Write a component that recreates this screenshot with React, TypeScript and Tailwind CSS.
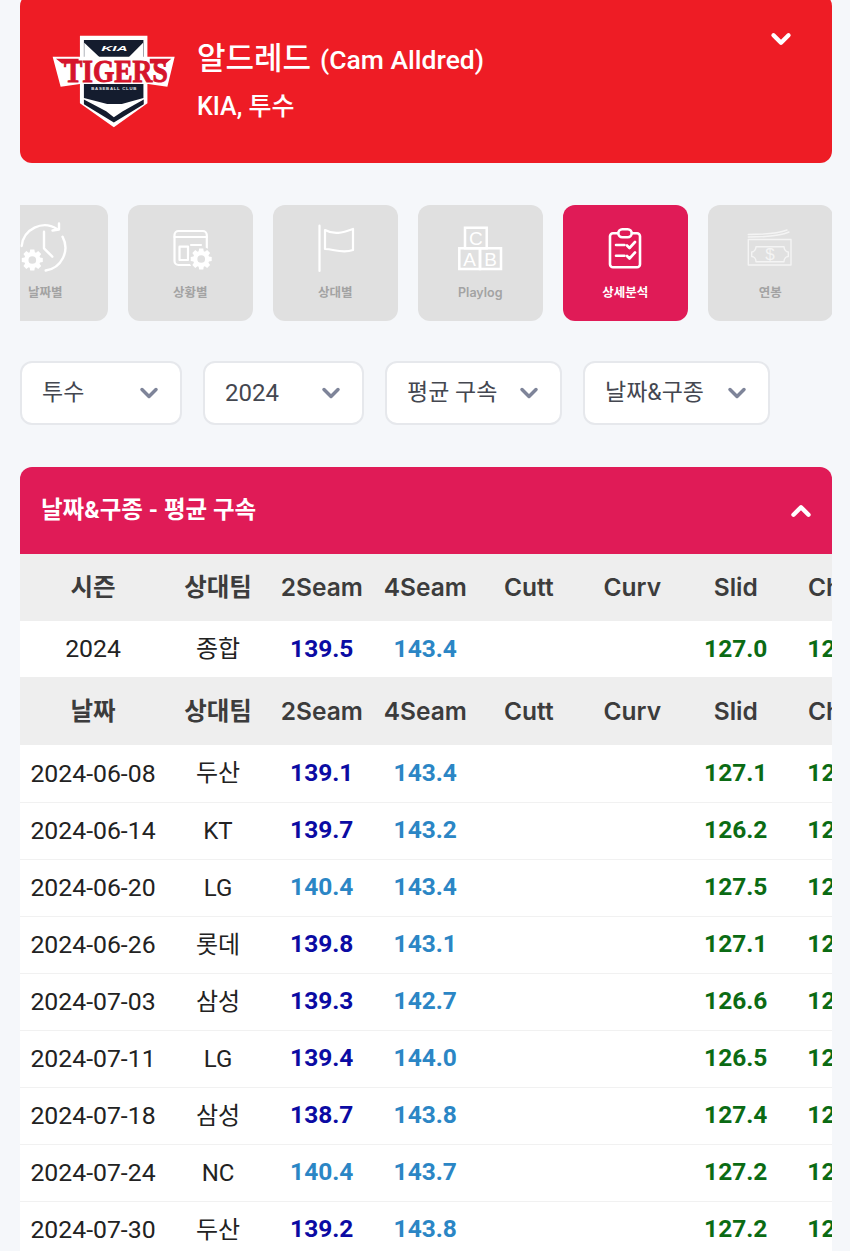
import { ChevronDown, ChevronUp } from "lucide-react";

const FONT = "font-['Roboto','Noto_Sans_CJK_KR',sans-serif]";
const INTER = "font-['Inter','Noto_Sans_CJK_KR',sans-serif]";

const DARK = "text-[#0b0ba3]";
const LIGHT = "text-[#2b86c5]";
const GREEN = "text-[#0b6b14]";

const rows = [
  { date: "2024-06-08", team: "두산", two: "139.1", four: "143.4", slid: "127.1" },
  { date: "2024-06-14", team: "KT", two: "139.7", four: "143.2", slid: "126.2" },
  { date: "2024-06-20", team: "LG", two: "140.4", four: "143.4", slid: "127.5" },
  { date: "2024-06-26", team: "롯데", two: "139.8", four: "143.1", slid: "127.1" },
  { date: "2024-07-03", team: "삼성", two: "139.3", four: "142.7", slid: "126.6" },
  { date: "2024-07-11", team: "LG", two: "139.4", four: "144.0", slid: "126.5" },
  { date: "2024-07-18", team: "삼성", two: "138.7", four: "143.8", slid: "127.4" },
  { date: "2024-07-24", team: "NC", two: "140.4", four: "143.7", slid: "127.2" },
  { date: "2024-07-30", team: "두산", two: "139.2", four: "143.8", slid: "127.2" },
];

const TigersLogo = () => (
  <svg viewBox="90 100 385 285" className="w-[128px] h-[95px] shrink-0">
    <path d="M180 105H383V308L282 380L180 308Z" fill="#fff" />
    <path d="M192 118H371V292L306 310H262L192 292Z" fill="#141c2e" />
    <path d="M193 126L240 170H193ZM370 126L326 170H370Z" fill="#fff" />
    <path d="M192 297L259 332L282 350L309 332L372 297V311L282 366L192 311Z" fill="#141c2e" />
    <text x="284" y="152" textAnchor="middle" fontFamily="Liberation Sans" fontStyle="italic" fontWeight="700" fontSize="24" fill="#fff" textLength="80" lengthAdjust="spacingAndGlyphs">KIA</text>
    <path d="M98 168H465L443 258L385 250H180L122 258Z" fill="#fff" />
    <path d="M108 174H176V188H126ZM455 174H390V188H438Z" fill="#d5142c" />
    <text x="288" y="245" textAnchor="middle" fontFamily="Liberation Serif" fontWeight="700" fontSize="92" fill="#d5142c" stroke="#d5142c" strokeWidth="3" textLength="312" lengthAdjust="spacingAndGlyphs">TIGERS</text>
    <text x="282" y="269" textAnchor="middle" fontFamily="Liberation Sans" fontWeight="700" fontSize="13" fill="#e4e6ec" textLength="136" lengthAdjust="spacing">BASEBALL CLUB</text>
  </svg>
);

// gear outline built from its tooth count, hole cut with evenodd
const gearPath = (x: number, y: number, r: number) => {
  const pts: string[] = [];
  const teeth = 8;
  for (let i = 0; i < teeth; i++) {
    const a = (i / teeth) * Math.PI * 2;
    const step = Math.PI / teeth;
    [
      [a - step * 0.5, r],
      [a + step * 0.5, r],
      [a + step * 0.8, r * 0.76],
      [a + step * 1.2, r * 0.76],
    ].forEach(([t, d]) => pts.push(`${(x + Math.cos(t) * d).toFixed(2)} ${(y + Math.sin(t) * d).toFixed(2)}`));
  }
  const h = r * 0.36;
  return `M${pts.join("L")}Z M${x - h} ${y}a${h} ${h} 0 1 0 ${h * 2} 0a${h} ${h} 0 1 0 ${-h * 2} 0Z`;
};

const Gear = ({ x, y, r }: { x: number; y: number; r: number }) => (
  <g>
    <circle cx={x} cy={y} r={r + 1.5} fill="#e0e0e0" stroke="none" />
    <path d={gearPath(x, y, r)} fill="#fff" fillRule="evenodd" stroke="none" />
  </g>
);

const ClockIcon = () => (
  <svg viewBox="0 0 52 52" className="w-[52px] h-[52px]" fill="none" stroke="#fff" strokeWidth="2.4" strokeLinecap="round" strokeLinejoin="round">
    <path d="M2.700 24A23 23 0 0 1 38 7" />
    <path d="M40 1.500V7.500L33.500 8.500" />
    <path d="M43.500 14.700A23 23 0 0 1 26.700 48.500" />
    <path d="M25 9.700V26.300L33.300 34.700" />
    <Gear x={13.300} y={38} r={10.700} />
  </svg>
);

const SituationIcon = () => (
  <svg viewBox="0 0 52 52" className="w-[52px] h-[52px]" fill="none" stroke="#fff" strokeWidth="2.2" strokeLinecap="round" strokeLinejoin="round">
    <path d="M14.500 9H38.800a4 4 0 0 1 4 4V43H14.500a4 4 0 0 1-4-4V13a4 4 0 0 1 4-4Z" />
    <path d="M10.500 15H42.800" />
    <path d="M15.500 24.700H24V38H15.500Z" />
    <path d="M27 23H37" />
    <Gear x={37.200} y={37} r={10.700} />
  </svg>
);

const FlagIcon = () => (
  <svg viewBox="0 0 52 52" className="w-[52px] h-[52px]" fill="none" stroke="#fff" strokeWidth="2.2" strokeLinecap="round" strokeLinejoin="round">
    <path d="M10.500 3.700V49" />
    <path d="M16 8C25 13 33 11 44 7V28C33 32 25 27 16 27Z" />
  </svg>
);

const BlocksIcon = () => (
  <svg viewBox="0 0 52 52" className="w-[52px] h-[52px]" fill="none" stroke="#fff" strokeWidth="2.5">
    <path d="M11 5.700H32.700V26.300H11Z" />
    <path d="M5.300 26.300H26V47H5.300Z" />
    <path d="M26 26.300H47V47H26Z" />
    <g fill="#fff" stroke="none" fontFamily="Liberation Sans" fontSize="19" textAnchor="middle">
      <text x="21.800" y="23">C</text>
      <text x="15.700" y="43.500">A</text>
      <text x="36.500" y="43.500">B</text>
    </g>
  </svg>
);

const ClipboardIcon = () => (
  <svg viewBox="0 0 52 52" className="w-[52px] h-[52px]" fill="none" stroke="#fff" strokeWidth="2.600" strokeLinecap="round" strokeLinejoin="round">
    <path d="M19 11.300H14a3 3 0 0 0-3 3V42.300a3 3 0 0 0 3 3H38a3 3 0 0 0 3-3V14.300a3 3 0 0 0-3-3H33" />
    <rect x="19.300" y="7.300" width="13.400" height="8" rx="4" />
    <path d="M17 23H25.500M17 33.700H25.500" />
    <path d="M28 23.500L30.500 26L36 20M28 34L30.500 36.500L36 30.500" />
  </svg>
);

const CashIcon = () => (
  <svg viewBox="0 0 52 52" className="w-[52px] h-[52px]" fill="none" stroke="#f4f4f4" strokeWidth="1.400" strokeLinecap="round" strokeLinejoin="round">
    <path d="M4.300 17.500H47V43H4.300Z" />
    <path d="M4.300 15C22 15 36 14 45 10M4.300 12.500C20 12.500 34 11.500 43 8" />
    <path d="M12 24.700H40C40 27.500 42 30 44.300 30V34.500C42 34.500 40 36.500 40 39.700H12C12 36.500 10 34.500 7.700 34.500V30C10 30 12 27.500 12 24.700Z" />
    <text x="26" y="37.500" textAnchor="middle" fontFamily="Liberation Sans" fontSize="17" fill="#f4f4f4" stroke="none">$</text>
  </svg>
);

const Tile = ({ label, active, first, icon }: { label: string; active?: boolean; first?: boolean; icon: React.ReactNode }) => (
  <div
    className={`w-[124.500px] h-[116px] shrink-0 rounded-[12px] flex flex-col items-center pt-[17px] ${INTER} ${first ? "-ml-[37px]" : ""} ${
      active ? "bg-[#e01b57] text-white" : "bg-[#e0e0e0] text-[#a3a3a3]"
    }`}
  >
    {icon}
    <span className="mt-[11px] text-[12.500px] leading-[16px] font-semibold">{label}</span>
  </div>
);

const Select = ({ label, width, size = "text-[23px]" }: { label: string; width: string; size?: string }) => (
  <button className={`${width} h-[64px] shrink-0 bg-white border-2 border-[#e6e8ec] rounded-[12px] flex items-center justify-between pl-[20px] pr-[17px] text-[#444750] ${size}`}>
    <span>{label}</span>
    <ChevronDown className="w-[28px] h-[28px] text-[#7e8499]" strokeWidth={3} />
  </button>
);

const Th = ({ children }: { children: React.ReactNode }) => (
  <th className={`text-center text-[24.500px] font-semibold text-[#3c3c3c] whitespace-nowrap p-0 ${INTER}`}>{children}</th>
);

const Num = ({ value, color }: { value: string; color: string }) => (
  <td className={`text-center text-[24.500px] font-bold whitespace-nowrap p-0 ${color}`}>{value}</td>
);

const pitchHeads = ["2Seam", "4Seam", "Cutt", "Curv", "Slid", "Chan"];

export default function App() {
  return (
    <div className={`h-[1251px] overflow-hidden bg-[#f5f7fa] pl-[20px] pr-[18px] ${FONT}`}>
      {/* Player card */}
      <div className="-mt-[6px] h-[169px] bg-[#ee1c25] rounded-[12px] flex items-center pl-[30px] pr-[36px] pt-[6px] text-white">
        <TigersLogo />
        <div className="ml-[19px] flex-1 -mt-[2px]">
          <div className="flex items-baseline gap-[9px]">
            <span className="text-[31px] leading-[40px] font-medium">알드레드</span>
            <span className="text-[26.500px] leading-[40px] font-medium">(Cam Alldred)</span>
          </div>
          <div className="mt-[11px] text-[25px] leading-[32px] font-medium">KIA, 투수</div>
        </div>
        <ChevronDown className="w-[30px] h-[30px] self-start mt-[24px]" strokeWidth={3.500} />
      </div>

      {/* Category tiles */}
      <div className="mt-[42px] flex gap-[20.500px] overflow-hidden">
        <Tile first label="날짜별" icon={<ClockIcon />} />
        <Tile label="상황별" icon={<SituationIcon />} />
        <Tile label="상대별" icon={<FlagIcon />} />
        <Tile label="Playlog" icon={<BlocksIcon />} />
        <Tile active label="상세분석" icon={<ClipboardIcon />} />
        <Tile label="연봉" icon={<CashIcon />} />
      </div>

      {/* Filters */}
      <div className="mt-[40px] flex gap-[21px]">
        <Select label="투수" width="w-[162px]" />
        <Select label="2024" width="w-[161px]" size="text-[24px]" />
        <Select label="평균 구속" width="w-[177px]" />
        <Select label="날짜&구종" width="w-[187px]" />
      </div>

      {/* Panel */}
      <div className="mt-[42px] rounded-t-[12px] overflow-hidden">
        <div className="h-[87px] bg-[#e01b57] flex items-center justify-between pl-[21px] pr-[16px] text-white">
          <span className="text-[23.500px] font-bold">날짜&구종 - 평균 구속</span>
          <ChevronUp className="w-[30px] h-[30px]" strokeWidth={3.500} />
        </div>
        <div className="overflow-hidden">
          <table className="table-fixed border-collapse w-[870px] text-[#222]">
            <colgroup>
              <col className="w-[146px]" />
              <col className="w-[104px]" />
              <col className="w-[103.500px]" />
              <col className="w-[103.500px]" />
              <col className="w-[103.500px]" />
              <col className="w-[103.500px]" />
              <col className="w-[103.500px]" />
              <col className="w-[103px]" />
            </colgroup>
            <tbody>
              <tr className="h-[67px] bg-[#eeeeee]">
                <Th>시즌</Th>
                <Th>상대팀</Th>
                {pitchHeads.map((h) => (
                  <Th key={h}>{h}</Th>
                ))}
              </tr>
              <tr className="h-[56px] bg-white">
                <td className="text-center text-[24.800px] p-0">2024</td>
                <td className="text-center text-[24px] p-0">종합</td>
                <Num value="139.5" color={DARK} />
                <Num value="143.4" color={LIGHT} />
                <td />
                <td />
                <Num value="127.0" color={GREEN} />
                <Num value="120.0" color={GREEN} />
              </tr>
              <tr className="h-[68px] bg-[#eeeeee]">
                <Th>날짜</Th>
                <Th>상대팀</Th>
                {pitchHeads.map((h) => (
                  <Th key={h}>{h}</Th>
                ))}
              </tr>
              {rows.map((r) => (
                <tr key={r.date} className="h-[57px] bg-white border-b border-[#f1f1f1]">
                  <td className="text-center text-[24.800px] p-0">{r.date}</td>
                  <td className="text-center text-[24px] p-0">{r.team}</td>
                  <Num value={r.two} color={parseFloat(r.two) >= 140 ? LIGHT : DARK} />
                  <Num value={r.four} color={LIGHT} />
                  <td />
                  <td />
                  <Num value={r.slid} color={GREEN} />
                  <Num value="120.0" color={GREEN} />
                </tr>
              ))}
            </tbody>
          </table>
        </div>
      </div>
    </div>
  );
}
